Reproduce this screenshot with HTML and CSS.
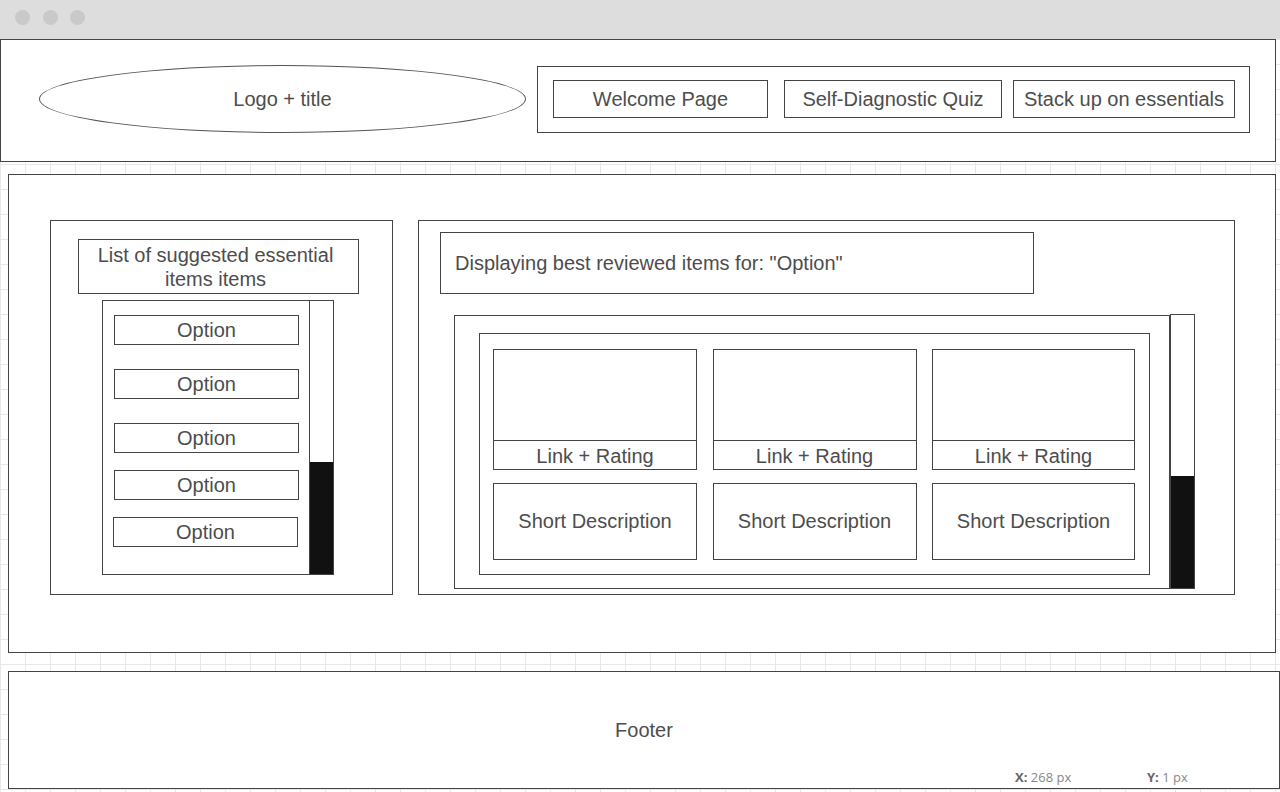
FILE: index.html
```html
<!DOCTYPE html>
<html lang="en">
<head>
<meta charset="utf-8">
<title>Essentials wireframe</title>
<link rel="stylesheet" href="styles.css">
</head>
<body>
<div class="chrome">
  <span class="dot"></span><span class="dot"></span><span class="dot"></span>
</div>

<header class="site-header">
  <div class="logo">Logo + title</div>
  <nav class="nav">
    <a class="nav-btn nb-welcome">Welcome Page</a>
    <a class="nav-btn nb-quiz">Self-Diagnostic Quiz</a>
    <a class="nav-btn nb-stack">Stack up on essentials</a>
  </nav>
</header>

<main class="main">
  <section class="panel-left">
    <div class="list-title">List of suggested essential items items</div>
    <div class="list-box">
      <div class="options">
        <div class="option">Option</div>
        <div class="option">Option</div>
        <div class="option">Option</div>
        <div class="option">Option</div>
        <div class="option">Option</div>
      </div>
      <div class="scrollbar small"><div class="thumb"></div></div>
    </div>
  </section>

  <section class="panel-right">
    <div class="results-title">Displaying best reviewed items for: "Option"</div>
    <div class="results-row">
      <div class="results-scroll">
        <div class="results-grid">
          <div class="card"><div class="card-img"></div><div class="card-link">Link + Rating</div></div>
          <div class="card"><div class="card-img"></div><div class="card-link">Link + Rating</div></div>
          <div class="card"><div class="card-img"></div><div class="card-link">Link + Rating</div></div>
          <div class="desc">Short Description</div>
          <div class="desc">Short Description</div>
          <div class="desc">Short Description</div>
        </div>
      </div>
      <div class="scrollbar big"><div class="thumb"></div></div>
    </div>
  </section>
</main>

<footer class="footer">
  Footer
  <div class="coords"><span class="cx"><b>X:</b> 268 px</span><span class="cy"><b>Y:</b> 1 px</span></div>
</footer>
</body>
</html>
```

FILE: styles.css
```css
* { box-sizing: border-box; }

html, body { height: 100%; }

body {
  margin: 0;
  font-family: "Liberation Sans", Arial, sans-serif;
  font-size: 20px;
  color: #4d4d4d;
  background-color: #ffffff;
  background-image:
    linear-gradient(to right, #e8e8e8 1px, transparent 1px),
    linear-gradient(to bottom, #e8e8e8 1px, transparent 1px);
  background-size: 25px 25px;
  background-position: 0 14px;
  overflow: hidden;
}

.chrome {
  height: 39px;
  background: #dddddd;
  display: flex;
  padding: 10px 0 0 15px;
  gap: 12.5px;
}
.dot {
  width: 15px;
  height: 15px;
  border-radius: 50%;
  background: #c9c9c9;
}

.site-header {
  width: 1276px;
  height: 123px;
  border: 1px solid #444;
  background: #fff;
  display: flex;
  align-items: flex-start;
  padding: 25px 0 0 38px;
}
.logo {
  width: 487px;
  height: 68px;
  border: 1px solid #555;
  border-radius: 50%;
  display: flex;
  align-items: center;
  justify-content: center;
}
.nav {
  margin: 1px 0 0 11px;
  width: 713px;
  height: 67px;
  border: 1px solid #444;
  padding: 13px 0 0 15px;
  display: flex;
  align-items: flex-start;
}
.nav-btn {
  height: 38px;
  border: 1px solid #444;
  display: flex;
  align-items: center;
  justify-content: center;
  white-space: nowrap;
}
.nb-welcome { width: 215px; }
.nb-quiz { width: 218px; margin-left: 16px; }
.nb-stack { width: 222px; margin-left: 11px; }

.main {
  margin: 12px 0 0 8px;
  width: 1268px;
  height: 479px;
  border: 1px solid #444;
  background: #fff;
  padding: 45px 0 0 41px;
  display: flex;
  align-items: flex-start;
  gap: 25px;
}

.panel-left {
  width: 343px;
  height: 375px;
  border: 1px solid #444;
  padding: 18px 0 0 27px;
}
.list-title {
  width: 281px;
  height: 55px;
  border: 1px solid #444;
  display: flex;
  align-items: center;
  justify-content: center;
  text-align: center;
  line-height: 24px;
  padding: 0 16px 0 10px;
}
.list-box {
  margin: 6px 0 0 24px;
  width: 232px;
  height: 275px;
  border: 1px solid #444;
  display: flex;
}
.options {
  flex: 1;
  padding: 14px 0 0 11px;
}
.option {
  width: 185px;
  height: 30px;
  border: 1px solid #444;
  display: flex;
  align-items: center;
  justify-content: center;
  padding-top: 1px;
}
.option:nth-child(2), .option:nth-child(3) { margin-top: 24px; }
.option:nth-child(4) { margin-top: 17px; }
.option:nth-child(5) { margin-top: 17px; margin-left: -1px; }

.scrollbar {
  display: flex;
  flex-direction: column;
  background: #fff;
}
.scrollbar .thumb {
  margin-top: auto;
  background: #111;
}
.scrollbar.small {
  width: 24px;
  border-left: 1px solid #444;
}
.scrollbar.small .thumb { height: 112px; }

.panel-right {
  width: 817px;
  height: 375px;
  border: 1px solid #444;
  padding: 11px 0 0 21px;
}
.results-title {
  width: 594px;
  height: 62px;
  border: 1px solid #444;
  padding-left: 14px;
  display: flex;
  align-items: center;
}
.results-row {
  margin: 21px 0 0 14px;
  display: flex;
  align-items: flex-start;
}
.results-scroll {
  width: 716px;
  height: 274px;
  border: 1px solid #444;
  padding: 17px 0 0 24px;
}
.scrollbar.big {
  width: 25px;
  height: 275px;
  margin-top: -1px;
  border: 1px solid #444;
}
.scrollbar.big .thumb { height: 112px; }

.results-grid {
  width: 671px;
  height: 242px;
  border: 1px solid #444;
  padding: 15px 0 0 13px;
  display: grid;
  grid-template-columns: 204px 204px 203px;
  grid-template-rows: 121px 77px;
  column-gap: 15.5px;
  row-gap: 13px;
}
.card {
  border: 1px solid #444;
  display: flex;
  flex-direction: column;
}
.card-img { flex: 1; }
.card-link {
  height: 29px;
  border-top: 1px solid #444;
  display: flex;
  align-items: center;
  justify-content: center;
  padding-top: 3px;
}
.desc {
  border: 1px solid #444;
  display: flex;
  align-items: center;
  justify-content: center;
}

.footer {
  position: relative;
  margin: 18px 0 0 8px;
  width: 1272px;
  height: 118px;
  border: 1px solid #444;
  background: #fff;
  display: flex;
  align-items: center;
  justify-content: center;
}
.coords {
  position: absolute;
  left: 1006px;
  top: 97px;
  font-family: "Open Sans", sans-serif;
  font-size: 13px;
  line-height: 16px;
  color: #888;
  display: flex;
}
.coords b { color: #666; font-weight: 700; }
.cx { width: 132px; }
```
